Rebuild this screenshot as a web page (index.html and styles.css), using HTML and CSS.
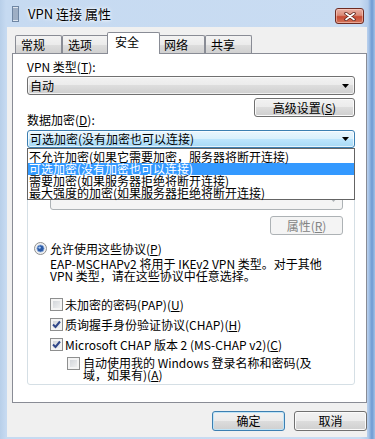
FILE: index.html
```html
<!DOCTYPE html>
<html lang="zh-CN">
<head>
    <meta charset="UTF-8">
    <meta name="viewport" content="width=device-width, initial-scale=1.0">
    <title>VPN 连接 属性</title>
    <link rel="stylesheet" href="styles.css">
</head>
<body>

<div class="window">
    <div class="titlebar">
        <svg class="app-icon" width="7" height="16" viewBox="0 0 7 16">
            <rect x="0.5" y="0.5" width="6" height="15" fill="#dfe6ef" stroke="#6f86a3"/>
            <path d="M1 3h5M1 5h5M1 7h5M1 9h5M1 11h5M1 13h5" stroke="#5d7799" stroke-width="1"/>
        </svg>
        <span class="title">VPN 连接 属性</span>
        <div class="close-btn">
            <svg width="12" height="9" viewBox="0 0 12 9">
                <path d="M2 1.5L10 7.5M10 1.5L2 7.5" stroke="#5a2018" stroke-width="3.4" stroke-linecap="round"/>
                <path d="M2 1.5L10 7.5M10 1.5L2 7.5" stroke="#ffffff" stroke-width="1.7" stroke-linecap="round"/>
            </svg>
        </div>
    </div>

    <div class="client">
        <div class="tabs">
            <div class="tab">常规</div>
            <div class="tab">选项</div>
            <div class="tab selected">安全</div>
            <div class="tab">网络</div>
            <div class="tab">共享</div>
        </div>

        <div class="panel">
            <div class="label">VPN 类型(<u>T</u>):</div>
            <div class="combo">
                <span>自动</span>
                <svg width="7" height="4" viewBox="0 0 7 4"><path d="M0 0h7L3.5 4z" fill="#000"/></svg>
            </div>
            <div class="btn-row">
                <button class="btn btn-adv">高级设置(<u>S</u>)</button>
            </div>

            <div class="label label-enc">数据加密(<u>D</u>):</div>
            <div class="combo-wrap">
                <div class="combo open">
                    <span>可选加密(没有加密也可以连接)</span>
                    <svg width="7" height="4" viewBox="0 0 7 4"><path d="M0 0h7L3.5 4z" fill="#000"/></svg>
                </div>
                <ul class="droplist">
                    <li>不允许加密(如果它需要加密，服务器将断开连接)</li>
                    <li class="sel">可选加密(没有加密也可以连接)</li>
                    <li>需要加密(如果服务器拒绝将断开连接)</li>
                    <li>最大强度的加密(如果服务器拒绝将断开连接)</li>
                </ul>
            </div>

            <fieldset class="group">
                <legend>身份验证</legend>
                <div class="opt opt-eap">
                    <svg width="13" height="13" viewBox="0 0 13 13">
                        <circle cx="6.5" cy="6.5" r="6" fill="#f1f1f1" stroke="#8e8f8f"/>
                    </svg>
                    <span>使用可扩展的身份验证协议(EAP)(<u>E</u>)</span>
                </div>
                <div class="combo eap">
                    <span></span>
                    <svg width="7" height="4" viewBox="0 0 7 4"><path d="M0 0h7L3.5 4z" fill="#adb2b5"/></svg>
                </div>
                <div class="btn-row btn-row-props">
                    <button class="btn btn-disabled">属性(<u>R</u>)</button>
                </div>

                <div class="opt opt-allow">
                    <svg width="13" height="13" viewBox="0 0 13 13">
                        <circle cx="6.5" cy="6.5" r="6" fill="#f1f1f1" stroke="#8e8f8f"/>
                        <circle cx="6.5" cy="6.5" r="3.6" fill="#2b5aa6" stroke="#8fb0de" stroke-width="0.8"/>
                        <circle cx="5.6" cy="5.6" r="1.2" fill="#a9c8f0"/>
                    </svg>
                    <span>允许使用这些协议(<u>P</u>)</span>
                </div>
                <div class="note">EAP-MSCHAPv2 将用于 IKEv2 VPN 类型。对于其他<br>VPN 类型，请在这些协议中任意选择。</div>

                <div class="checks">
                    <div class="check first">
                        <span class="cb"></span>
                        <span>未加密的密码(PAP)(<u>U</u>)</span>
                    </div>
                    <div class="check">
                        <span class="cb"><svg width="9" height="9" viewBox="0 0 9 9"><path d="M1 4.5L3.5 7L8 1.5" stroke="#31488a" stroke-width="2" fill="none"/></svg></span>
                        <span>质询握手身份验证协议(CHAP)(<u>H</u>)</span>
                    </div>
                    <div class="check">
                        <span class="cb"><svg width="9" height="9" viewBox="0 0 9 9"><path d="M1 4.5L3.5 7L8 1.5" stroke="#31488a" stroke-width="2" fill="none"/></svg></span>
                        <span>Microsoft CHAP 版本 2 (MS-CHAP v2)(<u>C</u>)</span>
                    </div>
                    <div class="check sub">
                        <span class="cb"></span>
                        <span>自动使用我的 Windows 登录名称和密码(及<br>域，如果有)(<u>A</u>)</span>
                    </div>
                </div>
            </fieldset>
        </div>

        <div class="actions">
            <button class="btn btn-default">确定</button>
            <button class="btn">取消</button>
        </div>
    </div>
</div>

</body>
</html>
```

FILE: styles.css
```css
* {
    box-sizing: border-box;
}
html, body {
    margin: 0;
    padding: 0;
}
body {
    font-family: "Noto Sans CJK SC", "Noto Sans", sans-serif;
    font-size: 12px;
    line-height: 12px;
    color: #000;
    background: #c4d8ef;
}
u {
    text-decoration-thickness: 1px;
}
.window {
    width: 375px;
    height: 439px;
    display: flex;
    flex-direction: column;
    background: linear-gradient(to right, #b8cfe9 0, #c6daf1 6px, #c9dcf2 360px, #b3cceb 368px, #7fa7d9 371px, #6f9ad3 372px, #a5c2e6 375px);
}
.titlebar {
    height: 27px;
    display: flex;
    align-items: center;
    padding-left: 12px;
}
.app-icon {
    margin-top: 1px;
}
.title {
    margin-left: 9px;
    font-size: 13px;
    line-height: 14px;
    text-shadow: 0 0 5px #fff, 0 0 3px #fff;
}
.close-btn {
    margin-left: auto;
    margin-right: 11px;
    align-self: flex-start;
    margin-top: 8px;
    width: 29px;
    height: 16px;
    border: 1px solid #6e2b22;
    border-radius: 3px;
    background: linear-gradient(#eab0a4, #d98a77 45%, #c74a33 55%, #d2745a);
    box-shadow: inset 0 0 0 1px rgba(255, 220, 210, 0.5);
    display: flex;
    align-items: center;
    justify-content: center;
}
.client {
    flex: 1;
    margin: 0 8px 2px 7px;
    background: #f0f0f0;
    padding: 5px 0 0 5px;
}
.tabs {
    display: flex;
    align-items: flex-end;
    height: 21px;
    padding-left: 3px;
}
.tab {
    width: 47px;
    height: 18px;
    border: 1px solid #898c95;
    border-bottom: none;
    border-radius: 2px 2px 0 0;
    background: linear-gradient(#f3f3f3, #ebebeb 50%, #dedede 50%, #d0d0d0);
    padding: 3px 0 0 5px;
}
.tab.selected {
    width: 53px;
    height: 22px;
    margin: 0 -2px -1px;
    background: #fff;
    padding: 3px 0 0 7px;
    position: relative;
    z-index: 1;
}
.panel {
    height: 350px;
    border: 1px solid #898c95;
    background: #fff;
    padding: 7px 11px 0 14px;
}
.label {
    height: 12px;
}
.combo {
    height: 19px;
    margin-top: 3px;
    border: 1px solid #707070;
    border-radius: 3px;
    background: linear-gradient(#f2f2f2, #ebebeb 50%, #dddddd 50%, #cfcfcf);
    box-shadow: inset 0 0 0 1px rgba(255, 255, 255, 0.7);
    display: flex;
    align-items: center;
    justify-content: space-between;
    padding: 0 5px 0 2px;
}
.btn-row {
    display: flex;
    justify-content: flex-end;
    margin-top: 3px;
}
.btn {
    height: 19px;
    padding: 0;
    font: inherit;
    line-height: 12px;
    color: #000;
    border: 1px solid #707070;
    border-radius: 3px;
    background: linear-gradient(#f2f2f2, #ebebeb 50%, #dddddd 50%, #cfcfcf);
    box-shadow: inset 0 0 0 1px #fbfbfb;
}
.btn-adv {
    width: 101px;
}
.label-enc {
    margin-top: -3px;
}
.combo-wrap {
    position: relative;
    margin-top: 4px;
}
.combo.open {
    height: 18px;
    margin-top: 0;
    border-color: #3c7fb1;
    background: linear-gradient(#eaf6fd, #d9f0fc 50%, #bee6fd 50%, #a7d9f5);
}
.droplist {
    position: absolute;
    top: 100%;
    left: 0;
    right: 0;
    height: 52px;
    margin: 0;
    padding: 2px 0 0;
    list-style: none;
    background: #fff;
    border: 1px solid #646464;
    z-index: 5;
}
.droplist li {
    height: 12px;
    padding-left: 1px;
    white-space: nowrap;
}
.droplist li.sel {
    background: #3399ff;
    color: #fff;
}
.group {
    margin: 6px 0 0;
    padding: 0 11px 3px 6px;
    border: 1px solid #d5dfe5;
    border-radius: 3px;
    min-width: 0;
}
.group legend {
    padding: 0 1px;
    margin-left: 3px;
}
.opt {
    display: flex;
    align-items: center;
    gap: 3px;
    height: 13px;
}
.opt-eap {
    margin-top: 5px;
}
.combo.eap {
    height: 21px;
    margin: 5px 0 0 16px;
    border-color: #adb2b5;
    background: #f4f4f4;
    box-shadow: none;
}
.btn-row-props {
    margin-top: 6px;
}
.btn-disabled {
    width: 73px;
    color: #838383;
    border-color: #adb2b5;
    background: #f4f4f4;
    box-shadow: none;
}
.opt-allow {
    margin-top: 7px;
}
.note {
    margin: 3px 0 0 16px;
}
.checks {
    margin-left: 16px;
}
.check {
    display: flex;
    align-items: center;
    gap: 2px;
    margin-top: 7px;
}
.check.first {
    margin-top: 16px;
}
.check.sub {
    margin: 6px 0 0 17px;
    align-items: flex-start;
    gap: 3px;
}
.cb {
    width: 13px;
    height: 13px;
    flex: none;
    border: 1px solid #8e8f8f;
    background: linear-gradient(135deg, #cbcfd5, #f6f6f6);
    box-shadow: inset 0 0 0 2px #f4f4f4;
    display: flex;
    align-items: center;
    justify-content: center;
}
.actions {
    display: flex;
    justify-content: flex-end;
    gap: 9px;
    margin-top: 8px;
}
.actions .btn {
    width: 73px;
    height: 20px;
}
.btn-default {
    border-color: #3c7fb1;
    box-shadow: inset 0 0 0 1px #bfe4f7;
}
```
